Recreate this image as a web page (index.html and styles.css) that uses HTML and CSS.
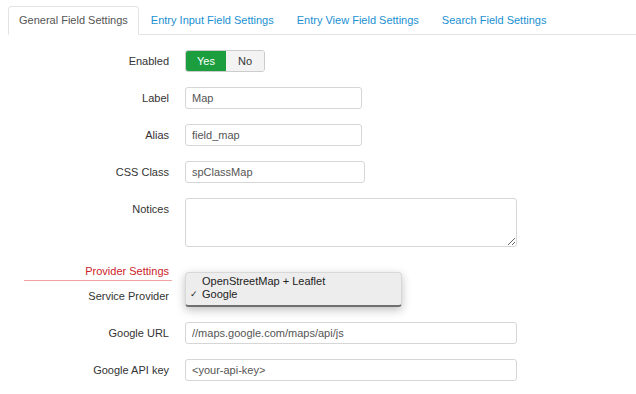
FILE: index.html
```html
<!DOCTYPE html>
<html lang="en">
<head>
  <meta charset="UTF-8">
  <title>Field Settings</title>
  <link rel="stylesheet" href="styles.css">
</head>
<body>

  <!-- Tabs -->
  <ul class="tabs">
    <li class="active">General Field Settings</li>
    <li>Entry Input Field Settings</li>
    <li>Entry View Field Settings</li>
    <li>Search Field Settings</li>
  </ul>

  <!-- General settings form -->
  <form class="fields">
    <div class="row">
      <label>Enabled</label>
      <div class="toggle">
        <span class="yes">Yes</span>
        <span class="no">No</span>
      </div>
    </div>

    <div class="row">
      <label>Label</label>
      <input class="text short" type="text" value="Map">
    </div>

    <div class="row">
      <label>Alias</label>
      <input class="text short" type="text" value="field_map">
    </div>

    <div class="row">
      <label>CSS Class</label>
      <input class="text mid" type="text" value="spClassMap">
    </div>

    <div class="row top">
      <label>Notices</label>
      <textarea class="notes"></textarea>
    </div>

    <div class="section">
      <span>Provider Settings</span>
    </div>

    <div class="row">
      <label>Service Provider</label>
      <div class="select">
        <ul class="popup">
          <li>OpenStreetMap + Leaflet</li>
          <li class="checked">Google</li>
        </ul>
      </div>
    </div>

    <div class="row">
      <label>Google URL</label>
      <input class="text long" type="text" value="//maps.google.com/maps/api/js">
    </div>

    <div class="row">
      <label>Google API key</label>
      <input class="text long" type="text" value="<your-api-key>">
    </div>
  </form>

</body>
</html>
```

FILE: styles.css
```css
* {
  box-sizing: border-box;
}

body {
  margin: 0;
  background: #fff;
  font-family: 'Liberation Sans', Arial, sans-serif;
  font-size: 11px;
  color: #333;
}

/* Tabs */
.tabs {
  display: flex;
  list-style: none;
  margin: 0 0 0 8px;
  padding: 6px 0 0;
  border-bottom: 1px solid #e3e3e3;
}

.tabs li {
  padding: 6px 10px;
  line-height: 15px;
  margin-right: 1px;
  margin-bottom: -1px;
  border: 1px solid transparent;
  border-radius: 4px 4px 0 0;
  color: #1a90d2;
}

.tabs li.active {
  color: #555;
  background: #fff;
  border-color: #e3e3e3;
  border-bottom-color: #fff;
}

/* Form rows */
.fields {
  padding: 15px 0 0 8px;
}

.row {
  display: flex;
  align-items: center;
  gap: 16px;
  margin-bottom: 15px;
}

.row.top {
  align-items: flex-start;
}

.row label {
  width: 161px;
  text-align: right;
  line-height: 22px;
  color: #333;
}

.toggle {
  display: flex;
  height: 22px;
  border: 1px solid #ccc;
  border-radius: 3px;
  overflow: hidden;
}

.toggle span {
  line-height: 20px;
  text-align: center;
}

.toggle .yes {
  width: 40px;
  background: #1c9e3e;
  color: #fff;
}

.toggle .no {
  width: 38px;
  background: #f3f3f3;
  color: #333;
}

.text {
  height: 22px;
  margin: 0;
  padding: 0 6px;
  border: 1px solid #d6d6d6;
  border-radius: 3px;
  font-family: inherit;
  font-size: 11px;
  color: #555;
  outline: none;
}

.short { width: 177px; }
.mid { width: 180px; }
.long { width: 332px; }

.notes {
  width: 332px;
  height: 49px;
  margin: 0;
  border: 1px solid #d6d6d6;
  border-radius: 3px;
  resize: both;
}

/* Provider heading */
.section {
  width: 148px;
  margin: 0 0 4px 16px;
  padding-right: 3px;
  border-bottom: 1px solid #f0a3a3;
  text-align: right;
  line-height: 18px;
  color: #cc2228;
}

/* Open select menu */
.select {
  position: relative;
  width: 217px;
  height: 22px;
  border: 1px solid #ccc;
  border-radius: 3px;
}

.popup {
  position: absolute;
  top: -14px;
  left: -1px;
  width: 217px;
  height: 35px;
  list-style: none;
  margin: 0;
  padding: 2px 0 0;
  background: #ededed;
  border: 1px solid #d8d8d8;
  border-bottom: 2px solid #6f6f6f;
  border-radius: 4px;
  box-shadow: 0 3px 10px rgba(0, 0, 0, 0.25);
  color: #222;
}

.popup li {
  position: relative;
  padding-left: 16px;
  line-height: 13px;
}

.popup li.checked::before {
  content: '\2713';
  position: absolute;
  left: 4px;
  font-family: 'DejaVu Sans', sans-serif;
  font-size: 9px;
}
```
